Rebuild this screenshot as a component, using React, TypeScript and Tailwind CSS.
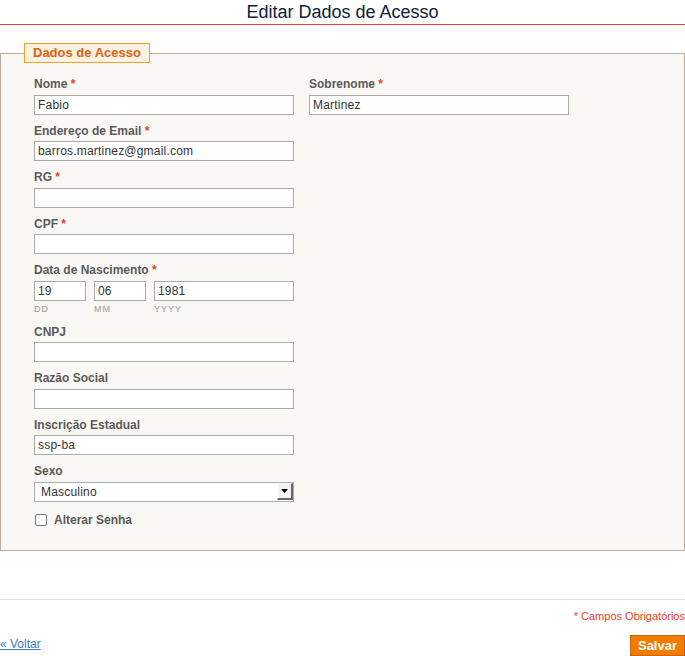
import React, { FC, useState } from "react";

interface FieldProps {
  label: string;
  required?: boolean;
  value?: string;
  onChange?: (v: string) => void;
}

const Label: FC<{ label: string; required?: boolean }> = ({ label, required }) => (
  <label className="block text-[12px] leading-[15.5px] font-bold text-[#5a5a5a] mb-[2px]">
    {label}
    {required && <span className="text-[#e8401c]"> *</span>}
  </label>
);

const inputClass =
  "block h-[20px] border border-[#aaaaaa] bg-white px-[3px] text-[12px] tracking-[0.2px] text-[#333333] outline-none";

const Field: FC<FieldProps> = ({ label, required, value, onChange }) => (
  <div className="mb-[9px]">
    <Label label={label} required={required} />
    <input
      type="text"
      value={value ?? ""}
      onChange={(e) => onChange && onChange(e.target.value)}
      className={`${inputClass} w-[260px]`}
    />
  </div>
);

const App: FC = () => {
  const [form, setForm] = useState({
    nome: "Fabio",
    sobrenome: "Martinez",
    email: "barros.martinez@gmail.com",
    rg: "",
    cpf: "",
    dd: "19",
    mm: "06",
    yyyy: "1981",
    cnpj: "",
    razao: "",
    inscricao: "ssp-ba",
    sexo: "Masculino",
  });
  const [alterarSenha, setAlterarSenha] = useState(false);

  const set = (key: keyof typeof form) => (v: string) =>
    setForm({ ...form, [key]: v });

  return (
    <div className="w-[685px] h-[656px] bg-white font-['Liberation_Sans',Arial,sans-serif] overflow-hidden">
      <h1 className="h-[25px] leading-[24px] text-center text-[18px] text-[#0d2238] border-b border-[#e8403a]">
        Editar Dados de Acesso
      </h1>

      <fieldset className="mt-[18px] border border-[#bcae9e] bg-[#f9f8f5]">
        <legend className="ml-[23px] h-[20px] px-[8px] border border-[#f0a020] bg-[#faf3e3] text-[13px] leading-[18px] font-bold text-[#e06010]">
          Dados de Acesso
        </legend>

        <div className="pl-[33px] pt-[14px] pb-[21px]">
          <div className="flex gap-[15px]">
            <Field label="Nome" required value={form.nome} onChange={set("nome")} />
            <Field label="Sobrenome" required value={form.sobrenome} onChange={set("sobrenome")} />
          </div>
          <Field label="Endereço de Email" required value={form.email} onChange={set("email")} />
          <Field label="RG" required value={form.rg} onChange={set("rg")} />
          <Field label="CPF" required value={form.cpf} onChange={set("cpf")} />

          <div className="mb-[9px]">
            <Label label="Data de Nascimento" required />
            <div className="flex gap-[8px]">
              {[
                { key: "dd" as const, hint: "DD", w: "w-[52px]" },
                { key: "mm" as const, hint: "MM", w: "w-[52px]" },
                { key: "yyyy" as const, hint: "YYYY", w: "w-[140px]" },
              ].map((d) => (
                <div key={d.key}>
                  <input
                    type="text"
                    value={form[d.key]}
                    onChange={(e) => set(d.key)(e.target.value)}
                    className={`${inputClass} ${d.w}`}
                  />
                  <div className="text-[9px] leading-[13px] tracking-[1px] text-[#999999] mt-[2px]">
                    {d.hint}
                  </div>
                </div>
              ))}
            </div>
          </div>

          <Field label="CNPJ" value={form.cnpj} onChange={set("cnpj")} />
          <Field label="Razão Social" value={form.razao} onChange={set("razao")} />
          <Field label="Inscrição Estadual" value={form.inscricao} onChange={set("inscricao")} />

          <div className="mb-[9px]">
            <Label label="Sexo" />
            <div className="relative w-[260px] h-[20px]">
              <select
                value={form.sexo}
                onChange={(e) => set("sexo")(e.target.value)}
                className="appearance-none block w-full h-full border border-[#aaaaaa] bg-white pl-[6px] text-[12px] tracking-[0.2px] text-[#333333] outline-none"
              >
                <option>Masculino</option>
                <option>Feminino</option>
              </select>
              <div className="pointer-events-none absolute right-[1px] top-[1px] w-[16px] h-[17px] bg-[#f4f4f4] border-r-2 border-b-2 border-[#666666] border-l border-t border-l-[#ffffff] border-t-[#ffffff] flex items-center justify-center">
                <svg width="7" height="4" viewBox="0 0 7 4">
                  <path d="M0 0 H7 L3.5 4 Z" fill="#000" />
                </svg>
              </div>
            </div>
          </div>

          <label className="flex items-center gap-[7px] text-[12px] font-bold text-[#5a5a5a]">
            <input
              type="checkbox"
              checked={alterarSenha}
              onChange={(e) => setAlterarSenha(e.target.checked)}
              className="appearance-none ml-[1px] w-[12px] h-[12px] border border-[#777777] rounded-[2px] bg-white checked:bg-[#e06010]"
            />
            Alterar Senha
          </label>
        </div>
      </fieldset>

      <div className="mt-[48px] border-t border-[#e0e0e0]" />
      <div className="mt-[9px] text-right text-[11px] leading-[14px] text-[#e8401c]">
        * Campos Obrigatórios
      </div>
      <div className="mt-[12px] flex items-end justify-between">
        <a href="#" className="text-[12px] leading-[15px] text-[#3a7cc4] underline mb-[4px]">
          « Voltar
        </a>
        <button className="w-[55px] h-[21px] bg-[#f07c00] border border-[#d06000] text-white text-[13px] font-bold leading-[19px]">
          Salvar
        </button>
      </div>
    </div>
  );
};

export default App;
